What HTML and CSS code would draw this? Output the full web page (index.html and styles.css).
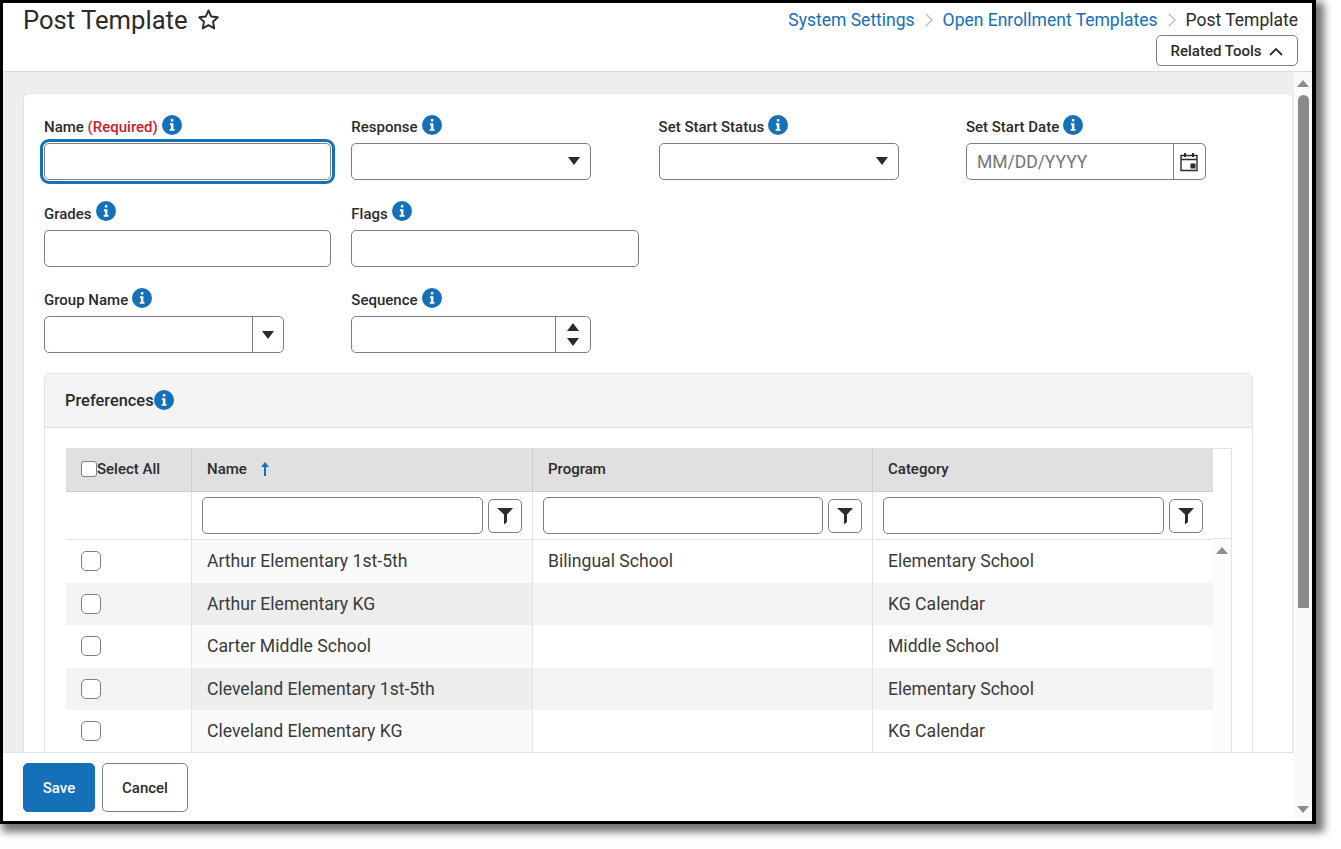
FILE: index.html
```html
<!DOCTYPE html>
<html lang="en">
<head>
<meta charset="utf-8">
<title>Post Template</title>
<link rel="stylesheet" href="styles.css">
</head>
<body>
<svg class="defs" width="0" height="0" aria-hidden="true">
  <symbol id="info" viewBox="0 0 20 20">
    <circle cx="10" cy="10" r="10" fill="#1370b9"/>
    <path fill="#fff" d="M8.9 3.9h2.4v2.5H8.9zM7.9 8.3h3.500v5.600h1.100v1.900H7.700v-1.900h1.200v-3.700h-1z"/>
  </symbol>
  <symbol id="funnel" viewBox="0 0 16 18">
    <path fill="#2b2b2b" d="M0 1h16L10 7.500V15L7 17.500V7.500z"/>
  </symbol>
</svg>
<div class="frame">
  <header class="top">
    <div class="title-wrap">
      <h1 class="title">Post Template</h1>
      <svg class="star" viewBox="0 0 24 24"><path fill="none" stroke="#2b2b2b" stroke-width="2" stroke-linejoin="round" d="M12 2.600l2.900 6.300 6.800.8-5 4.700 1.300 6.800-6-3.400-6 3.400 1.300-6.800-5-4.700 6.800-.8z"/></svg>
    </div>
    <div class="top-right">
      <nav class="crumbs">
        <a class="crumb-link">System Settings</a>
        <svg class="crumb-sep" viewBox="0 0 8 14"><path fill="none" stroke="#c4c4c4" stroke-width="1.500" d="M1 1l6 6-6 6"/></svg>
        <a class="crumb-link">Open Enrollment Templates</a>
        <svg class="crumb-sep" viewBox="0 0 8 14"><path fill="none" stroke="#c4c4c4" stroke-width="1.500" d="M1 1l6 6-6 6"/></svg>
        <span class="crumb-current">Post Template</span>
      </nav>
      <button class="tools-btn">Related Tools
        <svg class="tools-chev" viewBox="0 0 14 9"><path fill="none" stroke="#2b2b2b" stroke-width="1.800" d="M1 8l6-6 6 6"/></svg>
      </button>
    </div>
  </header>
  <div class="body">
    <div class="content">
      <main class="scroll">
        <section class="card">
          <div class="form-grid">
            <div class="field f-wide">
              <label class="label">Name <span class="req">(Required)</span><svg class="info"><use href="#info"/></svg></label>
              <input class="input focus" type="text">
            </div>
            <div class="field f-mid">
              <label class="label">Response<svg class="info"><use href="#info"/></svg></label>
              <div class="input select"><span class="caret"></span></div>
            </div>
            <div class="field f-mid">
              <label class="label">Set Start Status<svg class="info"><use href="#info"/></svg></label>
              <div class="input select"><span class="caret"></span></div>
            </div>
            <div class="field f-mid">
              <label class="label">Set Start Date<svg class="info"><use href="#info"/></svg></label>
              <div class="input combo">
                <span class="placeholder">MM/DD/YYYY</span>
                <span class="addon addon-cal">
                  <svg class="cal" viewBox="0 0 18 20"><path fill="none" stroke="#2b2b2b" stroke-width="1.400" d="M1 3.500h16v15H1zM1 7.500h16"/><path fill="#2b2b2b" d="M4 1h2v4H4zM12 1h2v4h-2zM10.500 11.500h5v5h-5z"/></svg>
                </span>
              </div>
            </div>
            <div class="field f-wide row-start">
              <label class="label">Grades<svg class="info"><use href="#info"/></svg></label>
              <input class="input" type="text">
            </div>
            <div class="field f-flags">
              <label class="label">Flags<svg class="info"><use href="#info"/></svg></label>
              <input class="input" type="text">
            </div>
            <div class="field f-mid row-start">
              <label class="label">Group Name<svg class="info"><use href="#info"/></svg></label>
              <div class="input combo">
                <span class="placeholder"></span>
                <span class="addon addon-drop"><span class="caret"></span></span>
              </div>
            </div>
            <div class="field f-mid">
              <label class="label">Sequence<svg class="info"><use href="#info"/></svg></label>
              <div class="input combo">
                <span class="placeholder"></span>
                <span class="addon addon-spin"><span class="caret up"></span><span class="caret"></span></span>
              </div>
            </div>
          </div>

          <section class="panel">
            <div class="panel-head">Preferences<svg class="info tight"><use href="#info"/></svg></div>
            <div class="panel-body">
              <div class="grid-box">
                <div class="grid-main">
                  <table class="grid">
                    <colgroup><col class="c1"><col class="c2"><col class="c3"><col class="c4"></colgroup>
                    <thead>
                      <tr class="head-row">
                        <th><span class="select-all"><input class="cb small" type="checkbox">Select All</span></th>
                        <th class="pad">Name <svg class="sort" viewBox="0 0 10 14"><path fill="#1370b9" d="M5 0l4 5H6v9H4V5H1z"/></svg></th>
                        <th class="pad">Program</th>
                        <th class="pad">Category</th>
                      </tr>
                      <tr class="filter-row">
                        <td></td>
                        <td><div class="filter"><span class="input filter-input"></span><span class="filter-btn"><svg class="funnel"><use href="#funnel"/></svg></span></div></td>
                        <td><div class="filter"><span class="input filter-input"></span><span class="filter-btn"><svg class="funnel"><use href="#funnel"/></svg></span></div></td>
                        <td><div class="filter"><span class="input filter-input"></span><span class="filter-btn"><svg class="funnel"><use href="#funnel"/></svg></span></div></td>
                      </tr>
                    </thead>
                    <tbody>
                      <tr><td class="cb-cell"><input class="cb" type="checkbox"></td><td class="pad">Arthur Elementary 1st-5th</td><td class="pad">Bilingual School</td><td class="pad">Elementary School</td></tr>
                      <tr class="alt"><td class="cb-cell"><input class="cb" type="checkbox"></td><td class="pad">Arthur Elementary KG</td><td class="pad"></td><td class="pad">KG Calendar</td></tr>
                      <tr><td class="cb-cell"><input class="cb" type="checkbox"></td><td class="pad">Carter Middle School</td><td class="pad"></td><td class="pad">Middle School</td></tr>
                      <tr class="alt"><td class="cb-cell"><input class="cb" type="checkbox"></td><td class="pad">Cleveland Elementary 1st-5th</td><td class="pad"></td><td class="pad">Elementary School</td></tr>
                      <tr><td class="cb-cell"><input class="cb" type="checkbox"></td><td class="pad">Cleveland Elementary KG</td><td class="pad"></td><td class="pad">KG Calendar</td></tr>
                      <tr class="alt"><td class="cb-cell"></td><td class="pad"></td><td class="pad"></td><td class="pad"></td></tr>
                    </tbody>
                  </table>
                </div>
                <div class="grid-side">
                  <div class="grid-side-top"></div>
                  <div class="grid-side-track"><span class="sb-up small-arrow"></span></div>
                </div>
              </div>
            </div>
          </section>
        </section>
      </main>
      <footer class="foot">
        <button class="btn primary">Save</button>
        <button class="btn">Cancel</button>
      </footer>
    </div>
    <aside class="scrollbar">
      <span class="sb-up"></span>
      <div class="sb-track"><div class="sb-thumb"></div></div>
      <span class="sb-down"></span>
    </aside>
  </div>
</div>
</body>
</html>
```
FILE: styles.css
```css
* { box-sizing: border-box; }
html, body { margin: 0; padding: 0; background: #fff; }
body { font-family: Roboto, "Liberation Sans", sans-serif; color: #2b2b2b; width: 1341px; height: 849px; overflow: hidden; }
.defs { display: block; height: 0; }

.frame {
  width: 1316px; height: 824px;
  border: 3px solid #000;
  border-right-width: 4px;
  display: flex; flex-direction: column;
  background: #fff;
  box-shadow: 5px 5px 8px 3px rgba(0,0,0,.55);
}

.top {
  height: 69px; flex: none;
  display: flex; justify-content: space-between;
  border-bottom: 1px solid #dcdcdc;
  padding: 0 14px 0 20px;
  background: #fff;
}
.title-wrap { display: flex; align-items: flex-start; gap: 9px; }
.title { margin: 0; font-size: 25.6px; font-weight: 400; line-height: 34px; color: #2b2b2b; }
.star { width: 23px; height: 23px; margin-top: 5px; }
.top-right { display: flex; flex-direction: column; align-items: flex-end; }
.crumbs { display: flex; align-items: center; height: 34px; font-size: 17.5px; }
.crumb-link { color: #1370b9; }
.crumb-current { color: #2b2b2b; }
.crumb-sep { width: 8px; height: 14px; margin: 0 10px; }
.tools-btn {
  width: 142px; height: 31px; margin: -2px 0 0;
  border: 1px solid #808080; border-radius: 5px; background: #fff;
  font: 500 15px Roboto, sans-serif; color: #2b2b2b;
  display: flex; align-items: center; justify-content: center; gap: 8px; padding: 1px 0 0;
}
.tools-chev { width: 14px; height: 9px; }

.body { flex: 1; display: flex; min-height: 0; }
.content { flex: 1; min-width: 0; display: flex; flex-direction: column; }
.scroll { flex: 1; min-height: 0; overflow: hidden; background: #eee; padding: 21px 0 0 20px; }

.card {
  width: 1270px; height: 800px;
  background: #fff;
  border: 1px solid #e2e2e2; border-radius: 5px 5px 0 0;
  padding: 19px 20px 0;
}
.form-grid { display: grid; grid-template-columns: repeat(4, 287.3px); column-gap: 20px; row-gap: 12px; grid-auto-rows: 74.5px; }
.field { display: flex; flex-direction: column; }
.row-start { grid-column: 1; }
.f-wide { width: 287px; }
.f-mid { width: 240px; }
.f-flags { width: 288px; }
.label { height: 30px; padding-bottom: 2px; font-size: 15px; font-weight: 500; display: flex; align-items: center; white-space: pre; color: #2b2b2b; }
.req { color: #c8202c; }
.info { width: 20px; height: 20px; margin: 0 0 5px 4px; flex: none; }
.info.tight { margin: 0; }
.input {
  display: block; height: 37px; width: 100%;
  border: 1px solid #808080; border-radius: 5px; background: #fff; padding: 0;
}
.focus { outline: 3px solid #1370b9; outline-offset: 1px; }
.select { position: relative; display: flex; align-items: center; justify-content: flex-end; padding-right: 9px; }
.select .caret { margin-right: 1px; margin-top: -1px; }
.caret { display: block; width: 0; height: 0; border-left: 6px solid transparent; border-right: 6px solid transparent; border-top: 8px solid #2b2b2b; }
.caret.up { border-top: 0; border-bottom: 8px solid #2b2b2b; }
.combo { display: flex; }
.placeholder { flex: 1; font-size: 17.5px; line-height: 37px; padding-left: 10px; color: #757575; }
.addon { flex: none; border-left: 1px solid #808080; display: flex; flex-direction: column; align-items: center; justify-content: center; }
.addon-cal { width: 32px; }
.addon-drop { width: 31px; }
.addon-spin { width: 35px; gap: 7px; }
.cal { width: 18px; height: 20px; }

.panel { width: 1209px; margin-top: 12px; border: 1px solid #e2e2e2; border-radius: 5px 5px 0 0; height: 500px; }
.panel-head {
  height: 54px; background: #f3f3f3; border-bottom: 1px solid #e2e2e2;
  display: flex; align-items: center; padding-left: 20px;
  font-size: 16.4px; font-weight: 500; color: #2b2b2b;
}
.panel-body { padding: 20px 20px 0 21px; }
.grid-box { display: flex; width: 1166px; border-right: 1px solid #e2e2e2; }
.grid-main { width: 1147px; flex: none; }
.grid { border-collapse: collapse; table-layout: fixed; width: 1147px; font-size: 17.6px; color: #3a3a3a; }
.c1 { width: 125px; } .c2 { width: 341px; } .c3 { width: 340px; } .c4 { width: 341px; }
.grid th, .grid td { padding: 0; border-left: 1px solid #e2e2e2; }
.grid tr > :first-child { border-left: 0; }
.head-row { height: 44px; background: #e0e0e0; }
.head-row th { font-size: 15px; font-weight: 500; text-align: left; color: #2b2b2b; border-left: 1px solid #cecece; border-bottom: 1px solid #cecece; }
.select-all { display: flex; align-items: center; padding-left: 15px; }
.pad { padding-left: 15.5px !important; }
.sort { width: 10px; height: 14px; margin-left: 9px; vertical-align: -2px; }
.filter-row { height: 48px; }
.filter-row td { border-bottom: 1px solid #e2e2e2; }
.filter { display: flex; align-items: center; padding: 0 10px; gap: 5px; }
.filter-input { flex: 1; height: 37px; }
.filter-btn { width: 34px; height: 34px; flex: none; border: 1px solid #808080; border-radius: 5px; display: flex; align-items: center; justify-content: center; }
.funnel { width: 16px; height: 18px; }
tbody tr { height: 43px; background: #fff; }
tbody tr.alt { height: 42px; background: #f3f3f3; }
tbody tr.alt .pad { padding-top: 1px; }
tbody td:nth-child(2) { background: #fafafa; }
tbody tr.alt td:nth-child(2) { background: #ededed; }
.cb-cell { padding-left: 15px !important; }
.cb {
  appearance: none; -webkit-appearance: none; display: block; margin: 0;
  width: 20px; height: 20px; border: 1px solid #808080; border-radius: 5px; background: #fff;
}
.cb.small { width: 16px; height: 16px; border-radius: 3px; flex: none; }

.grid-side { width: 18px; flex: none; display: flex; flex-direction: column; }
.grid-side-top { height: 91px; border-top: 1px solid #e2e2e2; border-bottom: 1px solid #e2e2e2; background: #fff; }
.grid-side-track { flex: 1; background: #fcfcfc; display: flex; justify-content: center; padding-top: 8px; height: 220px; }

.foot {
  height: 69px; flex: none; background: #fff; border-top: 1px solid #e2e2e2;
  display: flex; align-items: center; gap: 7px; padding: 0 0 0 20px; position: relative;
}
.btn { height: 49px; width: 86px; padding: 1px 0 0; border: 1px solid #808080; border-radius: 5px; background: #fff; font: 500 15px Roboto, sans-serif; color: #2b2b2b; }
.btn.primary { width: 72px; background: #1370b9; border-color: #1370b9; color: #fff; }

.scrollbar { width: 18px; flex: none; background: #fafafa; display: flex; flex-direction: column; align-items: center; padding: 8px 0 8px; }
.sb-up, .sb-down { display: block; width: 0; height: 0; border-left: 6.5px solid transparent; border-right: 6.5px solid transparent; flex: none; }
.sb-up { border-bottom: 7px solid #8c8c8c; }
.sb-down { border-top: 7px solid #8c8c8c; }
.sb-track { flex: 1; width: 100%; display: flex; justify-content: center; padding-top: 8px; }
.sb-thumb { width: 11px; height: 513px; background: #8a8a8a; border-radius: 6px 6px 0 0; }
```
